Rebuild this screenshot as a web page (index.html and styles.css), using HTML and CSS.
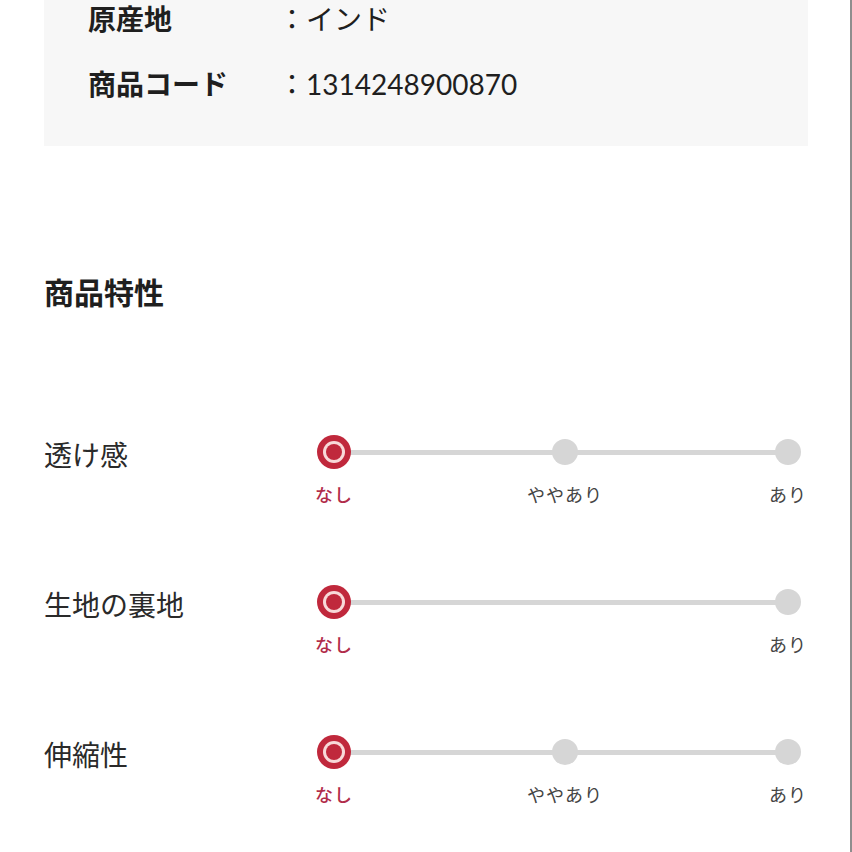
FILE: index.html
```html
<!DOCTYPE html>
<html lang="ja">
  <head>
    <meta charset="utf-8">
    <title>商品詳細</title>
    <link rel="stylesheet" href="styles.css">
  </head>
  <body>
    <div class="page">
      <div class="spec-box">
        <div class="spec-row">
          <span class="spec-label">原産地</span>
          <span class="spec-value">：インド</span>
        </div>
        <div class="spec-row">
          <span class="spec-label">商品コード</span>
          <span class="spec-value">：1314248900870</span>
        </div>
      </div>

      <h2 class="section-title">商品特性</h2>

      <div class="feature">
        <div class="feature-name">透け感</div>
        <div class="scale">
          <div class="point active">
            <span class="dot"></span>
            <span class="point-label">なし</span>
          </div>
          <div class="point middle">
            <span class="dot"></span>
            <span class="point-label">ややあり</span>
          </div>
          <div class="point">
            <span class="dot"></span>
            <span class="point-label">あり</span>
          </div>
        </div>
      </div>

      <div class="feature">
        <div class="feature-name">生地の裏地</div>
        <div class="scale">
          <div class="point active">
            <span class="dot"></span>
            <span class="point-label">なし</span>
          </div>
          <div class="point">
            <span class="dot"></span>
            <span class="point-label">あり</span>
          </div>
        </div>
      </div>

      <div class="feature">
        <div class="feature-name">伸縮性</div>
        <div class="scale">
          <div class="point active">
            <span class="dot"></span>
            <span class="point-label">なし</span>
          </div>
          <div class="point middle">
            <span class="dot"></span>
            <span class="point-label">ややあり</span>
          </div>
          <div class="point">
            <span class="dot"></span>
            <span class="point-label">あり</span>
          </div>
        </div>
      </div>
    </div>
  </body>
</html>
```

FILE: styles.css
```css
:root {
  --text: #1f1f1f;
  --accent: #c0283c;
  --accent-text: #b12c4a;
  --track: #d6d6d6;
  --box-bg: #f7f7f7;
}

html,
body {
  margin: 0;
  padding: 0;
  background: #ffffff;
}

body {
  font-family: Lato, "Noto Sans CJK JP", sans-serif;
  color: var(--text);
}

.page {
  box-sizing: border-box;
  width: 852px;
  min-height: 852px;
  padding: 0 42px 0 44px;
  border-right: 2px solid #8e8e8e;
}

/* spec table */
.spec-box {
  background: var(--box-bg);
  padding: 0 44px 43px;
  display: flex;
  flex-direction: column;
  gap: 27px;
}

.spec-row {
  display: flex;
  font-size: 28px;
  line-height: 38px;
}

.spec-label {
  width: 190px;
  font-weight: 700;
}

.spec-value {
  font-weight: 400;
}

.section-title {
  margin: 126px 0 122px;
  font-size: 30px;
  line-height: 41px;
  font-weight: 700;
}

/* feature scales */
.feature {
  display: flex;
  align-items: flex-start;
  margin-bottom: 78px;
}

.feature-name {
  width: 273px;
  font-size: 28px;
  line-height: 40px;
  color: #2a2a2a;
}

.scale {
  position: relative;
  flex: 1;
  display: flex;
  justify-content: space-between;
  margin-right: 3px;
}

.scale::before {
  content: "";
  position: absolute;
  left: 17px;
  right: 17px;
  top: 15px;
  height: 5px;
  background: var(--track);
}

.point {
  position: relative;
  width: 34px;
  display: flex;
  flex-direction: column;
  align-items: center;
}

.point.middle {
  margin-left: 8px;
}

.dot {
  box-sizing: border-box;
  width: 26px;
  height: 26px;
  margin: 4px 0;
  border-radius: 50%;
  background: var(--track);
}

.point.active .dot {
  width: 16px;
  height: 16px;
  margin: 9px 0;
  background: var(--accent);
  box-shadow: 0 0 0 3px #f8d9d9, 0 0 0 9px var(--accent);
}

.point-label {
  margin-top: 14px;
  white-space: nowrap;
  font-size: 18px;
  line-height: 24px;
  letter-spacing: 1px;
  color: #444444;
}

.point.active .point-label {
  color: var(--accent-text);
  font-weight: 500;
}
```
